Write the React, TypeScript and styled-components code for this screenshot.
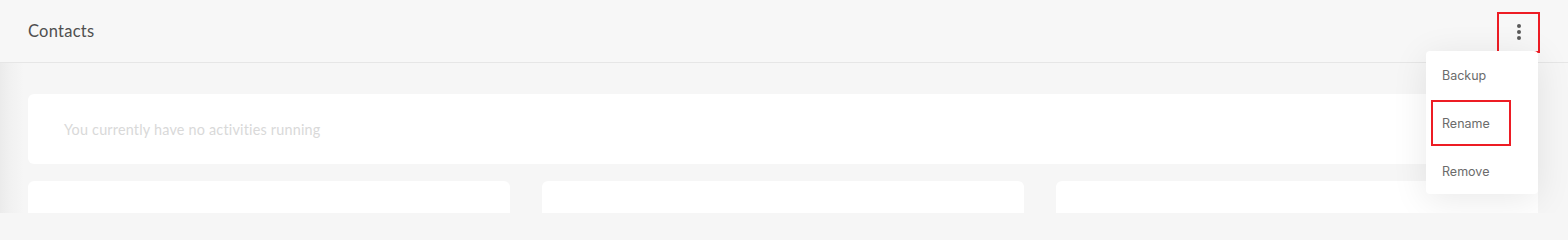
import React, { FC } from 'react';
import styled, { createGlobalStyle } from 'styled-components';

const GlobalStyle = createGlobalStyle`
  html, body {
    margin: 0;
    padding: 0;
    height: 100%;
    overflow: hidden;
    background: #f6f6f6;
  }
  body {
    font-family: 'Lato', 'Noto Sans', sans-serif;
  }
`;

interface IMenuItem {
  id: string;
  label: string;
}

const menuItems: IMenuItem[] = [
  { id: 'backup', label: 'Backup' },
  { id: 'rename', label: 'Rename' },
  { id: 'remove', label: 'Remove' }
];

const App: FC = () => {
  return (
    <>
      <GlobalStyle />
      <Page>
        <Header>
          <Title>Contacts</Title>
          <KebabButton $highlighted aria-label="More options">
            <Dot />
            <Dot />
            <Dot />
          </KebabButton>
          <Menu>
            {menuItems.map(({ id, label }) => (
              <MenuItem key={id} $highlighted={id === 'rename'}>
                {label}
              </MenuItem>
            ))}
          </Menu>
        </Header>
        <Content>
          <ActivityCard>
            <EmptyText>You currently have no activities running</EmptyText>
          </ActivityCard>
          <CardGrid>
            <Card />
            <Card />
            <Card />
          </CardGrid>
        </Content>
      </Page>
    </>
  );
};

export default App;

const Page = styled.div`
  display: flex;
  flex-direction: column;
  height: 213px;
  overflow: hidden;
  background: linear-gradient(90deg, #ebebeb 0px, #f1f1f1 10px, #f6f6f6 24px, #f6f6f6 100%);
`;

const Header = styled.header`
  position: relative;
  display: flex;
  align-items: center;
  justify-content: space-between;
  height: 62px;
  padding: 0 28px;
  background: #f7f7f7;
  border-bottom: 1px solid #e6e6e6;
  flex-shrink: 0;
`;

const Title = styled.h1`
  margin: -1px 0 0;
  font-family: 'Lato', 'Noto Sans', sans-serif;
  font-size: 16.5px;
  font-weight: 400;
  color: #4f4f4f;
  letter-spacing: 0.25px;
`;

const KebabButton = styled.button<{ $highlighted?: boolean }>`
  display: flex;
  flex-direction: column;
  align-items: center;
  justify-content: center;
  gap: 2px;
  width: 43px;
  height: 41px;
  padding: 0;
  margin-top: 2px;
  background: transparent;
  border: 2px solid ${({ $highlighted }) => ($highlighted ? '#ed1c24' : 'transparent')};
  cursor: pointer;
`;

const Dot = styled.span`
  width: 4px;
  height: 4px;
  border-radius: 50%;
  background: #5a5a5a;
`;

const Menu = styled.div`
  position: absolute;
  top: 51px;
  right: 30px;
  z-index: 10;
  display: flex;
  flex-direction: column;
  gap: 2px;
  width: 112px;
  padding: 1px 0 0;
  background: #ffffff;
  border-radius: 4px;
  box-shadow: 0 6px 36px rgba(0, 0, 0, 0.09);
`;

const MenuItem = styled.div<{ $highlighted?: boolean }>`
  display: flex;
  align-items: center;
  box-sizing: border-box;
  width: 80px;
  height: 46px;
  margin-left: 5px;
  padding-left: 9px;
  font-family: 'Inter', 'Open Sans', sans-serif;
  font-size: 12.5px;
  color: #6b6b6b;
  border: 2px solid ${({ $highlighted }) => ($highlighted ? '#ed1c24' : 'transparent')};
  cursor: pointer;
`;

const Content = styled.main`
  display: flex;
  flex-direction: column;
  gap: 17px;
  padding: 31px 30px 0 28px;
`;

const ActivityCard = styled.section`
  display: flex;
  align-items: center;
  height: 70px;
  padding: 0 36px;
  background: #ffffff;
  border-radius: 6px;
`;

const EmptyText = styled.p`
  margin: 0;
  font-family: 'Lato', 'Noto Sans', sans-serif;
  font-size: 14.4px;
  color: #d9d9d9;
  letter-spacing: 0.2px;
`;

const CardGrid = styled.div`
  display: grid;
  grid-template-columns: repeat(3, 1fr);
  gap: 32px;
`;

const Card = styled.div`
  height: 80px;
  background: #ffffff;
  border-radius: 6px;
`;
